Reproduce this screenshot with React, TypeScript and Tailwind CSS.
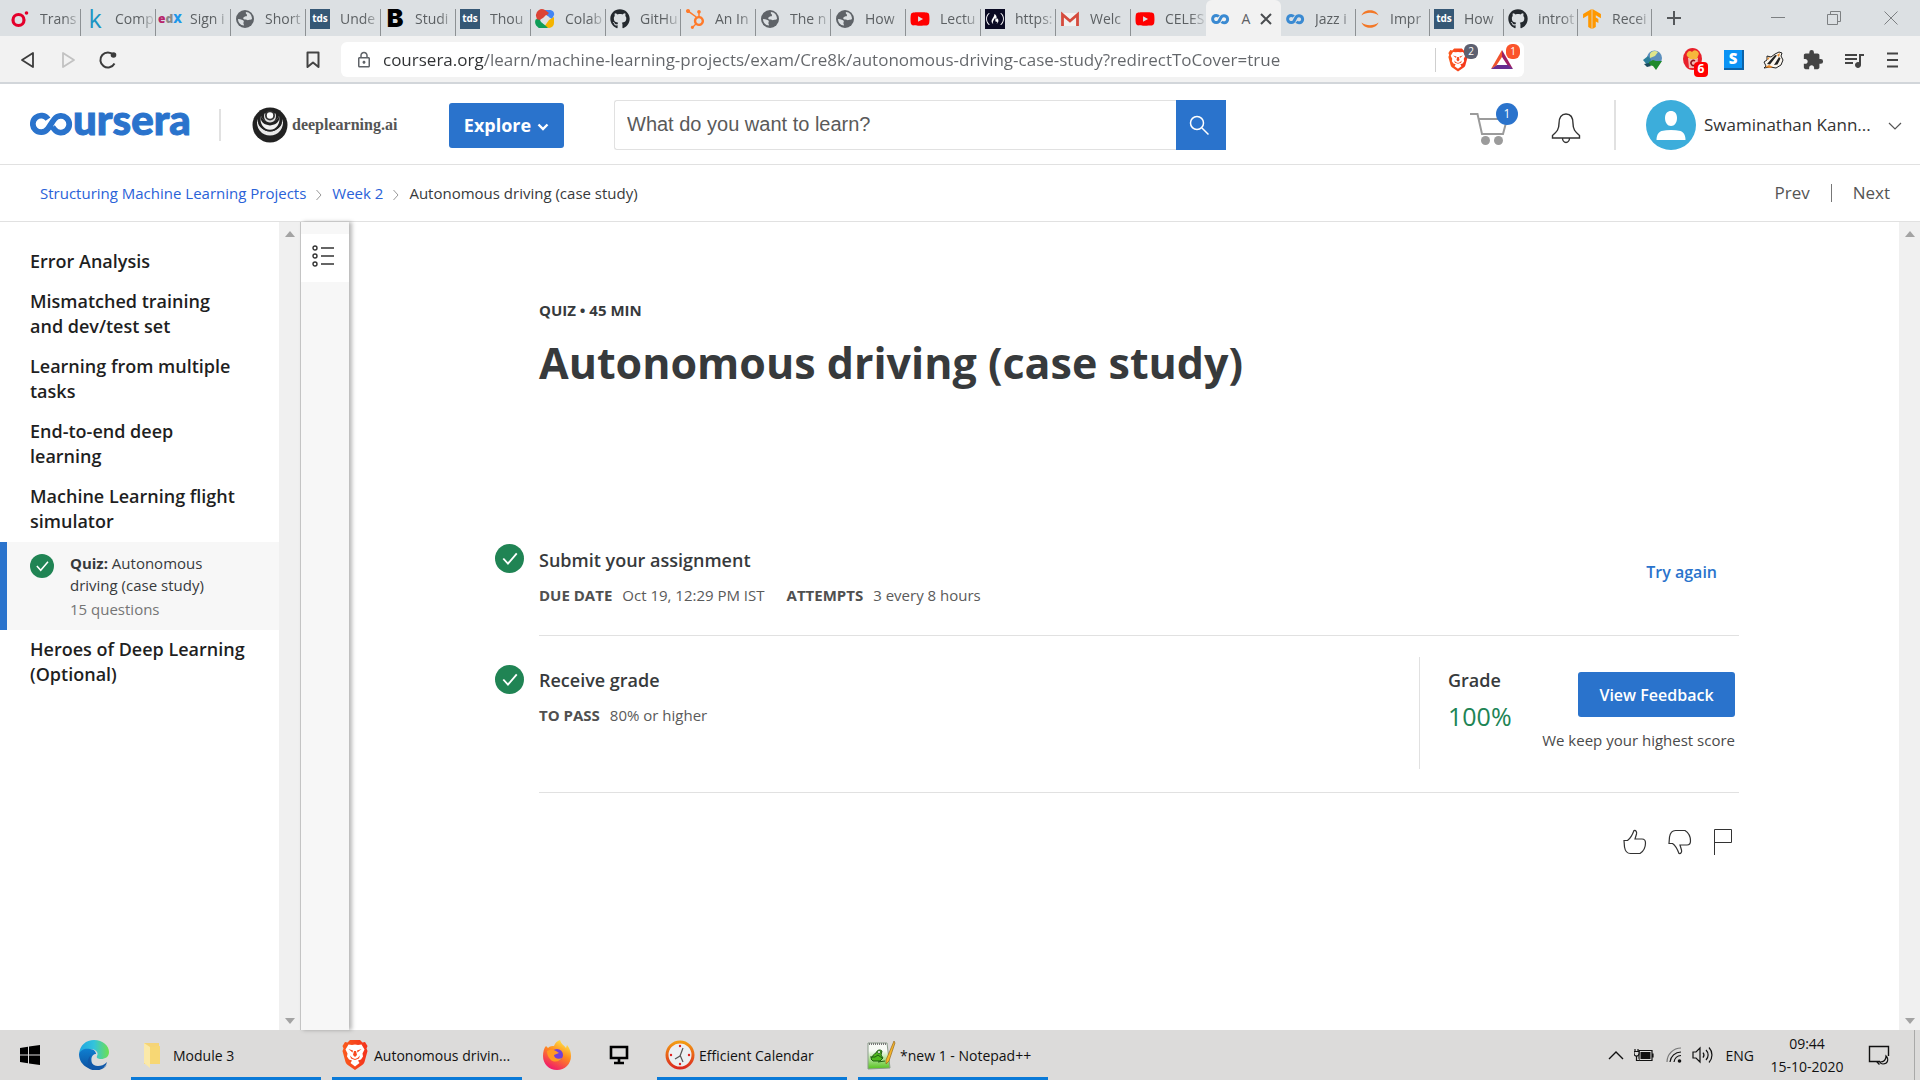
import { useState, type ReactNode } from "react";
import {
  FaFreeCodeCamp,
  FaGithub,
  FaHubspot,
  FaYoutube,
} from "react-icons/fa";
import { SiTensorflow } from "react-icons/si";
import { MdExtension, MdOutlineLock, MdQueueMusic } from "react-icons/md";

/* ---------- favicons ---------- */

const Globe = () => (
  <svg viewBox="0 0 20 20" className="size-5">
    <circle cx="10" cy="10" r="9" fill="#5f6368" />
    <path d="M3 10c1.500 0 3 .5 4.500 1 1.500.500 1.500 1.500 1 2.500s.5 1.500.5 3C5.500 16.500 3 13.500 3 10z" fill="#dce0e3" />
    <path d="M11 3c3.500 0 6 3 6 7-1 1-2.500.5-3.500 1s-2-.5-3.500-.5S7.500 9 9 8s2.500 0 3-1.500S10 5 11 3z" fill="#dce0e3" />
  </svg>
);

const Tds = () => (
  <span className="flex size-5 items-center justify-center bg-[#355876] text-[10px] font-bold text-white">tds</span>
);

const Infinity2 = () => (
  <svg viewBox="0 0 20 20" className="size-5">
    <path
      d="M8.800 7.500A3.600 3.600 0 1 0 8.800 12.500L11.200 8A3.600 3.600 0 1 1 11.500 12.800"
      fill="none"
      stroke="#3a8ad2"
      strokeWidth="3"
    />
  </svg>
);

const Colab = () => (
  <svg viewBox="0 0 20 20" className="size-5">
    <path d="M9 1h6a4 4 0 0 1 4 5l-2 4-5-3z" fill="#4285f4" />
    <path d="M1 7a6 6 0 0 1 9-6l4 3-5 5-3 1-3 4z" fill="#db4437" />
    <path d="M19 8v6a5 5 0 0 1-5 5l-5-1 5-7z" fill="#f4b400" />
    <path d="M1 10l4 1 1 2 5 4 2 2H7a6 6 0 0 1-6-9z" fill="#0f9d58" />
    <path d="M6 11l5-5 3 2-5 7z" fill="#dfe2e5" />
  </svg>
);

const Gmail = () => (
  <svg viewBox="0 0 20 20" className="size-5">
    <path d="M2 4h16v13H2z" fill="#f1f1f1" />
    <path d="M2.500 17V5.500L10 12l7.500-6.500V17" fill="none" stroke="#d54b3d" strokeWidth="2.800" />
  </svg>
);

const Jupyter = () => (
  <svg viewBox="0 0 20 20" className="size-5">
    <path d="M1.500 6.500C4-0.500 16-0.500 18.500 6.500 14 2.800 6 2.800 1.500 6.500z" fill="#f37726" />
    <path d="M1.500 13.500C4 20.500 16 20.500 18.500 13.500 14 17.200 6 17.200 1.500 13.500z" fill="#f37726" />
  </svg>
);

const Ring = () => (
  <svg viewBox="0 0 20 20" className="size-5">
    <circle cx="8.500" cy="11" r="5.500" fill="none" stroke="#e4002b" strokeWidth="3.200" />
    <circle cx="16.500" cy="4" r="1.800" fill="#e4002b" />
  </svg>
);

const BraveLion = ({ className }: { className: string }) => (
  <svg viewBox="0 0 26 30" className={className}>
    <defs>
      <linearGradient id="lion" x1="0" x2="1">
        <stop offset="0" stopColor="#fb5b1c" />
        <stop offset="1" stopColor="#f4321c" />
      </linearGradient>
    </defs>
    <path d="M8 0h10l2.500 2.500L23 2l2.500 4-1 2.500L25.500 11l-3 11c-.5 1.500-1.500 2.500-3 3.500L13 30l-6.500-4.500c-1.500-1-2.500-2-3-3.500L.5 11l1-2.500L.5 6 3 2l2.500.500z" fill="url(#lion)" />
    <path d="M6.500 4.500L10 5l3-.500 3 .500 3.500-.500 3 5-2 4 .5 3-2 3-3 1 1.500 2.500-4.500 3.500L8.500 23l1.500-2.500-3-1-2-3 .5-3-2-4z" fill="#fff" />
    <path d="M6.500 9l4.500 1.500-.5 2zM19.500 9L15 10.500l.5 2zM12 11h2l1 4-2 2-2-2zM8 15.500l2.500 2.500 2.500 1 2.500-1 2.500-2.500-1 3-4 1.500-4-1.500z" fill="#f8481e" />
  </svg>
);

const Letter = ({ children, className }: { children: ReactNode; className: string }) => (
  <span className={`flex size-5 items-center justify-center leading-none ${className}`}>{children}</span>
);

type Tab = { title: string; icon: ReactNode; active?: boolean; narrow?: boolean };

const tabs: Tab[] = [
  { title: "Trans", icon: <Ring /> },
  { title: "Comp", icon: <Letter className="text-[25px] font-medium text-[#1b95c4]">k</Letter> },
  {
    title: "Sign i",
    icon: (
      <Letter className="text-[12px] font-extrabold">
        <span className="text-[#b7256b]">e</span>
        <span className="text-[#8a8a8a]">d</span>
        <span className="text-[#1c97ea]">X</span>
      </Letter>
    ),
  },
  { title: "Short", icon: <Globe /> },
  { title: "Unde", icon: <Tds /> },
  { title: "Studi", icon: <Letter className="font-['Inter'] text-[25px] font-black text-black">B</Letter> },
  { title: "Thou", icon: <Tds /> },
  { title: "Colab", icon: <Colab /> },
  { title: "GitHu", icon: <FaGithub className="size-5 text-[#24292e]" /> },
  { title: "An In", icon: <FaHubspot className="size-5 text-[#ff7a2a]" /> },
  { title: "The n", icon: <Globe /> },
  { title: "How", icon: <Globe /> },
  { title: "Lectu", icon: <FaYoutube className="size-5 text-[#f00]" /> },
  {
    title: "https:",
    icon: (
      <span className="flex size-5 items-center justify-center bg-[#0a0a23] text-white">
        <FaFreeCodeCamp className="size-[18px]" />
      </span>
    ),
  },
  { title: "Welc", icon: <Gmail /> },
  { title: "CELES", icon: <FaYoutube className="size-5 text-[#f00]" /> },
  { title: "A", icon: <Infinity2 />, active: true },
  { title: "Jazz i", icon: <Infinity2 /> },
  { title: "Impr", icon: <Jupyter />, narrow: true },
  { title: "How", icon: <Tds />, narrow: true },
  { title: "introt", icon: <FaGithub className="size-5 text-[#24292e]" />, narrow: true },
  { title: "Recei", icon: <SiTensorflow className="size-5 text-[#ff9800]" />, narrow: true },
];

function TabStrip() {
  return (
    <div className="flex h-9 shrink-0 items-end bg-[#dce0e3] pl-1.5">
      <div role="tablist" aria-label="Tabs" className="flex h-full min-w-0 items-end">
        {tabs.map((tab, i) =>
          tab.active ? (
            <div key={i} className="flex h-full w-[75px] shrink-0 items-center gap-2 rounded-t-md bg-[#f2f2f2] pl-1 pt-0.5">
              <button role="tab" aria-selected="true" className="flex items-center gap-2.5">
                {tab.icon}
                <span className="w-3 text-[14px] leading-6 text-[#5c6063]">{tab.title}</span>
              </button>
              <button aria-label="Close tab">
                <svg viewBox="0 0 12 12" className="size-3">
                  <path d="M1 1l10 10M11 1L1 11" stroke="#4a4d50" strokeWidth="2" />
                </svg>
              </button>
            </div>
          ) : (
            <button
              key={i}
              role="tab"
              aria-selected="false"
              className={`flex h-[27px] shrink-0 items-center gap-2.5 pb-2 pl-1 ${tab.narrow ? "w-[74px]" : "w-[75px]"} ${
                tabs[i + 1]?.active ? "" : "border-r border-[#8d9194]"
              }`}
            >
              <span className="shrink-0">{tab.icon}</span>
              <span className="min-w-0 flex-1 whitespace-nowrap text-left text-[14px] leading-5 text-[#5c6063] [mask-image:linear-gradient(to_right,black_60%,transparent_105%)]">
                {tab.title}
              </span>
            </button>
          ),
        )}
      </div>
      <button aria-label="New tab" className="flex h-9 w-11 shrink-0 items-center justify-center">
        <svg viewBox="0 0 16 16" className="size-4">
          <path d="M8 1v14M1 8h14" stroke="#55585b" strokeWidth="2" />
        </svg>
      </button>
      <div className="ml-auto flex h-9 shrink-0">
        <button aria-label="Minimize" className="flex w-14 items-center justify-center">
          <svg viewBox="0 0 14 14" className="size-3.5">
            <path d="M0 6.500h14" stroke="#7d8082" />
          </svg>
        </button>
        <button aria-label="Restore" className="flex w-14 items-center justify-center">
          <svg viewBox="0 0 14 14" className="size-3.5">
            <path d="M.5 3.500h10v10H.500zM3.500 3.500V.500h10v10h-3" fill="none" stroke="#7d8082" />
          </svg>
        </button>
        <button aria-label="Close window" className="flex w-[58px] items-center justify-center">
          <svg viewBox="0 0 14 14" className="size-3.5">
            <path d="M.5.500l13 13M13.500.500l-13 13" stroke="#7d8082" />
          </svg>
        </button>
      </div>
    </div>
  );
}

function Toolbar() {
  const [url, setUrl] = useState(
    "coursera.org/learn/machine-learning-projects/exam/Cre8k/autonomous-driving-case-study?redirectToCover=true",
  );
  return (
    <div className="flex h-12 shrink-0 items-center border-b-2 border-[#d2d6da] bg-[#f2f2f2] pt-px">
      <button aria-label="Back" className="ml-[18px] flex size-5 items-center justify-center">
        <svg viewBox="0 0 20 20" className="size-5">
          <path d="M15 3v14L4 10z" fill="none" stroke="#3c3c3c" strokeWidth="1.800" strokeLinejoin="round" />
        </svg>
      </button>
      <button aria-label="Forward" className="ml-5 size-5">
        <svg viewBox="0 0 20 20" className="size-5">
          <path d="M5 3v14l11-7z" fill="none" stroke="#c2c2c2" strokeWidth="1.800" strokeLinejoin="round" />
        </svg>
      </button>
      <button aria-label="Reload" className="ml-5 size-5">
        <svg viewBox="0 0 20 20" className="size-5">
          <path d="M16.500 13.500A7.500 7.500 0 1 1 15.500 5" fill="none" stroke="#3c3c3c" strokeWidth="2" />
          <circle cx="15.500" cy="5" r="2.800" fill="#3c3c3c" />
        </svg>
      </button>
      <button aria-label="Bookmark" className="ml-[185px] size-5 shrink-0">
        <svg viewBox="0 0 20 20" className="size-5">
          <path d="M4.500 2.500h11V17L10 12.500 4.500 17z" fill="none" stroke="#444" strokeWidth="2" strokeLinejoin="round" />
        </svg>
      </button>
      <div className="ml-[18px] mr-[118px] flex h-[35px] min-w-0 flex-1 items-center rounded-md bg-white pl-3.5 pr-0.5">
        <MdOutlineLock className="size-[18px] shrink-0 text-[#5f6368]" />
        <input
          aria-label="Address"
          value={url}
          onChange={(e) => setUrl(e.target.value)}
          className="ml-2.5 min-w-0 flex-1 bg-[linear-gradient(to_right,#2f3133_101px,#63666a_101px)] bg-clip-text text-[17px] leading-7 text-transparent outline-none"
        />
        <span className="h-6 w-px bg-[#cfcfcf]" />
        <button aria-label="Brave Shields" className="relative ml-3 w-9">
          <BraveLion className="h-6 w-5" />
          <span className="absolute -top-1 left-4 flex h-[15px] w-3.5 items-center justify-center rounded-md bg-[#5d6070] text-[10px] text-white">2</span>
        </button>
        <button aria-label="Brave Rewards" className="relative ml-1.5 w-8">
          <svg viewBox="0 0 24 24" className="size-6">
            <path d="M12 2L1 21l5-3 6-9z" fill="#f0532d" />
            <path d="M12 2l11 19-5-3-6-9z" fill="#9e1f63" />
            <path d="M1 21h22l-5-4H7z" fill="#662d91" />
          </svg>
          <span className="absolute -top-1 left-4 flex h-[15px] w-3.5 items-center justify-center rounded-md bg-[#fb542b] text-[10px] text-white">1</span>
        </button>
      </div>
      <div className="flex shrink-0 items-center gap-[18px] pr-5">
        <button aria-label="Download manager" className="size-[22px]">
          <svg viewBox="0 0 22 22" className="size-[22px]">
            <circle cx="12.500" cy="9" r="7.500" fill="#5b8fbd" />
            <path d="M8 5c1-3 5-4 8-2l-3 4-5 2z" fill="#dfe58a" />
            <path d="M1 11l5-4 3 4-3 6z" fill="#2b7f9a" />
            <path d="M7 13l4-2 3 1h6l-6 9-3-4-4-1z" fill="#1e8a2c" />
            <path d="M2 15l5-1 2 3-4 1z" fill="#1b4b5c" />
          </svg>
        </button>
        <button aria-label="Popcorn extension" className="relative size-6">
          <svg viewBox="0 0 24 24" className="size-6">
            <ellipse cx="10.500" cy="11" rx="9.500" ry="11" fill="#e8212b" />
            <path d="M6 10h10l-1 10H7z" fill="#f3b9b2" />
            <path d="M6 9a3 3 0 0 1 4-5 3 3 0 0 1 6 4l-1 3H8z" fill="#f6b73c" />
            <path d="M13 13a2.500 2.500 0 1 0 0 4" fill="none" stroke="#8e1219" strokeWidth="1.500" />
          </svg>
          <span className="absolute left-3 top-3.5 flex h-[15px] w-3.5 items-center justify-center rounded-sm bg-[#f00] text-[12px] font-bold text-white">6</span>
        </button>
        <button aria-label="S extension" className="flex size-5 items-center justify-center border-b-2 border-r-2 border-[#0b62a8] bg-[#0a93f5] text-[15px] font-extrabold text-white">
          S
        </button>
        <button aria-label="Privacy Badger" className="size-[22px]">
          <svg viewBox="0 0 22 22" className="size-[22px]">
            <path d="M2 13l3-2 0-4 4 1 4-3 4-2 3 1-1 3 2 4-2 5-5 3-6-1-6 1 2-2z" fill="#fbf6ee" stroke="#222" />
            <path d="M5 15l8-9 2 .5-7 9zM12 16l5-8 1.500 1.500-3 6z" fill="#222" />
            <path d="M3 18l4-2 4 2-3 1zM5 9l3-1-2 3zM15 6l3-2-1 4z" fill="#e88a2d" />
          </svg>
        </button>
        <button aria-label="Extensions">
          <MdExtension className="size-[22px] text-[#444]" />
        </button>
        <button aria-label="Playlist">
          <MdQueueMusic className="size-6 text-[#444]" />
        </button>
        <button aria-label="Menu" className="size-4">
          <svg viewBox="0 0 16 16" className="size-4">
            <path d="M3 1.500h11M3 8h11M3 14.500h11" stroke="#444" strokeWidth="2" />
          </svg>
        </button>
      </div>
    </div>
  );
}

/* ---------- course site header ---------- */

function SiteHeader() {
  return (
    <header className="flex h-[81px] shrink-0 items-center border-b border-[#e1e1e1] bg-white pl-[30px] pr-[18px] pt-0.5">
      <a href="#home" aria-label="coursera" className="flex h-8 w-[160px] shrink-0 items-center pb-0.5 text-[#2a73cc]">
        <svg viewBox="0 0 43 24" className="h-6 w-[43px] shrink-0">
          <path
            d="M18 7.200A8.300 8.300 0 1 0 17.500 17.200C20 14 22 10 24.500 7A8.300 8.300 0 1 1 24.500 17.500L22.500 15"
            fill="none"
            stroke="currentColor"
            strokeWidth="5.800"
          />
        </svg>
        <span className="mb-2.5 font-['Lato'] text-[42px] font-black leading-8 [-webkit-text-stroke:1px_currentColor]">ursera</span>
      </a>
      <span className="ml-[29px] h-8 w-0.5 bg-[#e1e1e1]" />
      <a href="#deeplearning" className="ml-[31px] flex w-[146px] shrink-0 items-center gap-1">
        <svg viewBox="0 0 36 36" className="size-9 shrink-0">
          <circle cx="18" cy="18" r="17.500" fill="#222" />
          <path d="M5.500 12a13 13 0 1 0 25 0 12.500 12.500 0 0 1-25 0z" fill="#e8e8e8" />
          <path d="M5.500 12a12.500 10.500 0 1 0 25 0 12.500 12.500 0 0 1-25 0z" fill="#222" />
          <path d="M9 9a9.500 10.500 0 1 0 18 0 9.200 7.500 0 0 1-18 0z" fill="#f2f2f2" />
          <path d="M9 9a9.300 7.500 0 1 0 18 0 9.200 7 0 0 1-18 0z" fill="#222" />
          <path d="M12.500 6.500a6 6.500 0 1 0 11 0z" fill="#ddd" />
          <circle cx="18" cy="8.500" r="5" fill="#333" />
          <circle cx="18" cy="8.500" r="3.200" fill="#fff" />
        </svg>
        <span className="font-['Liberation_Serif'] text-[16px] font-bold leading-6 text-[#555]">deeplearning.ai</span>
      </a>
      <button className="ml-[51px] flex h-[45px] w-[115px] shrink-0 items-center justify-center gap-1.5 rounded-[3px] bg-[#2a73cc] text-[18px] font-bold text-white">
        Explore
        <svg viewBox="0 0 12 8" className="mt-1 h-2 w-3">
          <path d="M1.500 1.500L6 6l4.500-4.500" fill="none" stroke="#fff" strokeWidth="2.400" />
        </svg>
      </button>
      <form role="search" className="ml-[50px] flex h-[50px] w-[612px] shrink" onSubmit={(e) => e.preventDefault()}>
        <input
          aria-label="Search"
          placeholder="What do you want to learn?"
          className="min-w-0 flex-1 rounded-l-[3px] border border-r-0 border-[#e1e1e1] pb-0.5 pl-3 font-['Liberation_Sans'] text-[20px] text-[#333] outline-none placeholder:text-[#5a5a5a]"
        />
        <button aria-label="Submit search" className="flex w-[50px] items-center justify-center bg-[#2a73cc]">
          <svg viewBox="0 0 22 22" className="mr-1 size-[22px]">
            <circle cx="9" cy="9" r="6.500" fill="none" stroke="#fff" strokeWidth="1.500" />
            <path d="M14 14l6.500 6.500" stroke="#fff" strokeWidth="1.500" />
          </svg>
        </button>
      </form>
      <div className="ml-auto flex items-center">
        <button aria-label="Cart, 1 item" className="relative h-[50px] w-12">
          <svg viewBox="0 0 38 34" className="mt-2 h-[34px] w-[38px]">
            <path d="M0 2h7.500l4.500 20h21l4-15H9" fill="none" stroke="#9b9b9b" strokeWidth="2" />
            <circle cx="15.500" cy="28.500" r="4.500" fill="#9b9b9b" />
            <circle cx="28.500" cy="28.500" r="4.500" fill="#9b9b9b" />
          </svg>
          <span className="absolute left-[26px] top-[3px] flex size-[22px] items-center justify-center rounded-full bg-[#2a73cc] text-[12px] text-white">1</span>
        </button>
        <button aria-label="Notifications" className="ml-8 mt-1">
          <svg viewBox="0 0 32 34" className="h-[34px] w-8">
            <path
              d="M2.500 28v-2.500c4.500-4 6.500-6 6.500-12 0-6 2.500-9.500 7-9.500s7 3.500 7 9.500c0 6 2 8 6.500 12v2.500zM12.500 28a3.500 4.500 0 0 0 7 0"
              fill="none"
              stroke="#333"
              strokeWidth="1.400"
            />
          </svg>
        </button>
        <span className="ml-8 h-[50px] w-0.5 bg-[#e1e1e1]" />
        <button className="ml-[30px] flex items-center whitespace-nowrap text-[17px] text-[#333]">
          <svg viewBox="0 0 50 50" className="mr-2 size-[50px]">
            <circle cx="25" cy="25" r="25" fill="#3caddb" />
            <path d="M19 18c0-4.500 2.500-7 6-7s6 2.500 6 7-2.500 8-6 8-6-3.500-6-8z" fill="#fff" />
            <path d="M10.500 40c0-5 2-8 5-9 6-1.500 13-1.500 19 0 3 1 5 4 5 9z" fill="#fff" />
          </svg>
          <span className="w-[172px] text-left">Swaminathan Kann...</span>
          <svg viewBox="0 0 14 8" className="ml-3 mt-0.5 h-2 w-3.5">
            <path d="M1 1l6 6 6-6" fill="none" stroke="#555" strokeWidth="1.200" />
          </svg>
        </button>
      </div>
    </header>
  );
}

const CrumbArrow = () => (
  <svg viewBox="0 0 6 12" className="mt-1 h-3 w-1.5">
    <path d="M.5 1l4.500 5-4.500 5" fill="none" stroke="#999" />
  </svg>
);

function Breadcrumbs() {
  return (
    <div className="flex h-[57px] shrink-0 items-center justify-between border-b border-[#e1e1e1] bg-white pl-10 pr-[30px]">
      <nav aria-label="Breadcrumb" className="flex items-center gap-2.5 text-[15px] text-[#373a3c]">
        <a href="#course" className="text-[#2a62d8]">Structuring Machine Learning Projects</a>
        <CrumbArrow />
        <a href="#week2" className="text-[#2a62d8]">Week 2</a>
        <CrumbArrow />
        <span>Autonomous driving (case study)</span>
      </nav>
      <div className="flex items-center gap-[21px] text-[17px] text-[#555]">
        <a href="#prev">Prev</a>
        <span className="h-[18px] w-px bg-[#777]" />
        <a href="#next">Next</a>
      </div>
    </div>
  );
}

/* ---------- body ---------- */

const Check = ({ className }: { className: string }) => (
  <svg viewBox="0 0 28 28" className={className} role="img" aria-label="Completed">
    <circle cx="14" cy="14" r="14" fill="#208454" />
    <path d="M8 14l4.500 5L21 9" fill="none" stroke="#fff" strokeWidth="1.800" />
  </svg>
);

const ScrollBar = () => (
  <div aria-hidden="true" className="flex w-[21px] shrink-0 flex-col items-center justify-between bg-[#f0f0f0] pb-1.5 pt-[9px]">
    <svg viewBox="0 0 10 6" className="h-1.5 w-2.5">
      <path d="M5 0l5 6H0z" fill="#a3a3a3" />
    </svg>
    <svg viewBox="0 0 10 6" className="h-1.5 w-2.5">
      <path d="M5 6l5-6H0z" fill="#a3a3a3" />
    </svg>
  </div>
);

const lessons = [
  "Error Analysis",
  "Mismatched training and dev/test set",
  "Learning from multiple tasks",
  "End-to-end deep learning",
  "Machine Learning flight simulator",
];

const LessonLink = ({ title }: { title: string }) => (
  <a href="#lesson" className="block pb-2 pl-[30px] pr-8 pt-[7px] text-[18px] font-semibold leading-[25px] text-[#1f1f1f]">
    {title}
  </a>
);

function Sidebar() {
  return (
    <aside className="flex shrink-0 bg-white">
      <nav aria-label="Lessons" className="w-[279px] pt-5">
        {lessons.map((l) => (
          <LessonLink key={l} title={l} />
        ))}
        <a href="#quiz" className="flex h-[88px] border-l-[7px] border-[#2a73cc] bg-[#f7f7f7] pl-[23px] pt-2.5">
          <Check className="mt-0.5 size-6 shrink-0" />
          <span className="ml-4 w-[150px] text-[15px] leading-[22px] text-[#373a3c]">
            <b className="font-bold">Quiz:</b> Autonomous driving (case study)
            <span className="block pt-0.5 text-[#757575]">15 questions</span>
          </span>
        </a>
        <LessonLink title="Heroes of Deep Learning (Optional)" />
      </nav>
      <ScrollBar />
      <div className="z-10 w-[49px] border-l border-[#c4c4c4] bg-[#f7f7f7] pt-3 shadow-[3px_0_4px_rgba(0,0,0,0.28)]">
        <button aria-label="Toggle outline" className="flex h-12 w-full items-center justify-center bg-white">
          <svg viewBox="0 0 22 22" className="mb-1 mr-1 size-[22px]">
            <g fill="none" stroke="#333" strokeWidth="1.400">
              <circle cx="3" cy="3" r="2" />
              <circle cx="3" cy="11" r="2" />
              <circle cx="3" cy="19" r="2" />
              <path d="M9 3h13M9 11h13M9 19h13" />
            </g>
          </svg>
        </button>
      </div>
    </aside>
  );
}

const thumb = "M1 11.500h3.500c3-2 5-6 6.500-10 2-.5 3 1.500 2.500 3.500l-1.500 5h7c2 0 3.500 1.500 3.500 4 0 4.500-1.500 8-5.500 10.500H7.500C4 24.500 2 21 1.500 18z";

function Detail({ label, children }: { label: string; children: ReactNode }) {
  return (
    <span className="flex gap-2.5">
      <span className="font-bold text-[#505050]">{label}</span>
      <span>{children}</span>
    </span>
  );
}

function Main() {
  return (
    <main className="min-w-0 flex-1 bg-white pl-[146px] pr-40 pt-[77px]">
      <div className="pl-[44px] text-[#373a3c]">
        <p className="text-[15px] font-bold leading-[22px]">QUIZ • 45 MIN</p>
        <h1 className="mt-3 text-[43px] font-bold leading-[60px]">Autonomous driving (case study)</h1>
      </div>
      <section className="mt-[151px] grid grid-cols-[44px_1fr]">
        <Check className="size-[29px]" />
        <div className="flex h-[92px] items-start justify-between border-b border-[#e1e1e1] pt-[3px]">
          <div>
            <h2 className="text-[18px] font-semibold leading-[26px] text-[#373a3c]">Submit your assignment</h2>
            <div className="mt-[11px] flex gap-[22px] text-[15px] leading-[22px] text-[#5a5a5a]">
              <Detail label="DUE DATE">Oct 19, 12:29 PM IST</Detail>
              <Detail label="ATTEMPTS">3 every 8 hours</Detail>
            </div>
          </div>
          <button className="mr-[22px] mt-[13px] text-[16px] font-semibold leading-6 text-[#2a73cc]">Try again</button>
        </div>
      </section>
      <section className="grid grid-cols-[44px_1fr]">
        <Check className="mt-[29px] size-[29px]" />
        <div className="flex h-[157px] justify-between border-b border-[#e1e1e1] pb-[23px] pt-[21px]">
          <div className="pt-2.5">
            <h2 className="text-[18px] font-semibold leading-[26px] text-[#373a3c]">Receive grade</h2>
            <div className="mt-[11px] text-[15px] leading-[22px] text-[#5a5a5a]">
              <Detail label="TO PASS">80% or higher</Detail>
            </div>
          </div>
          <div className="flex w-[320px] justify-between border-l border-[#e1e1e1] pl-7 pr-1">
            <div className="pt-2.5">
              <h2 className="text-[18px] font-semibold leading-[26px] text-[#373a3c]">Grade</h2>
              <p className="mt-2 text-[25px] leading-[30px] text-[#208454]">100%</p>
            </div>
            <div className="-ml-4 flex flex-col items-end pt-[15px]">
              <button className="h-[45px] w-[157px] rounded-[3px] bg-[#2a73cc] text-[16px] font-semibold text-white">View Feedback</button>
              <p className="mt-3 whitespace-nowrap text-[15px] leading-[22px] text-[#4a4a4a]">We keep your highest score</p>
            </div>
          </div>
        </div>
      </section>
      <div className="mr-1.5 mt-9 flex justify-end gap-[21px]">
        <button aria-label="Like">
          <svg viewBox="0 0 24 26" className="h-[26px] w-6">
            <path d={thumb} fill="none" stroke="#333" strokeWidth="1.200" />
          </svg>
        </button>
        <button aria-label="Dislike">
          <svg viewBox="0 0 24 26" className="h-[26px] w-6 -scale-y-100">
            <path d={thumb} fill="none" stroke="#333" strokeWidth="1.200" />
          </svg>
        </button>
        <button aria-label="Flag">
          <svg viewBox="0 0 20 26" className="h-[26px] w-5">
            <path d="M1.500 26V.500h17v13H1.500" fill="none" stroke="#333" />
          </svg>
        </button>
      </div>
    </main>
  );
}

/* ---------- taskbar ---------- */

const TaskWindow = ({ icon, label, className = "" }: { icon: ReactNode; label: string; className?: string }) => (
  <button className={`flex h-full w-[190px] shrink-0 items-center border-b-[3px] border-[#0a7ad8] pt-[3px] text-[14px] text-[#111] ${className}`}>
    <span className="ml-2 mr-1 flex size-[30px] shrink-0 items-center justify-center">{icon}</span>
    {label}
  </button>
);

const Folder = () => (
  <svg viewBox="0 0 30 30" className="size-[30px]">
    <path d="M5 3h15v21H5z" fill="#f5d477" />
    <path d="M5 3l6 4v21l-6-5z" fill="#fbe9a9" />
    <path d="M11 7l10-1v18H11z" fill="#f7d774" />
  </svg>
);

const Edge = () => (
  <svg viewBox="0 0 30 30" className="size-[30px]">
    <defs>
      <linearGradient id="edgeTop" x1="0" x2="1">
        <stop offset="0" stopColor="#1fa5e0" />
        <stop offset=".5" stopColor="#33c3dd" />
        <stop offset="1" stopColor="#6ee04f" />
      </linearGradient>
      <linearGradient id="edgeLow" x1="0" x2="0" y1="0" y2="1">
        <stop offset="0" stopColor="#0f7fd0" />
        <stop offset="1" stopColor="#0c4f9e" />
      </linearGradient>
    </defs>
    <path d="M0 14C1 5 7 0 15 0c9 0 15 6 15 12 0 5-4 7-8 7-3 0-5-1-4-3 2-3-1-7-6-7C6 9 1 11 0 14z" fill="url(#edgeTop)" />
    <path d="M0 14c1-4 6-6 11-5 4 0 6 3 6 5-7 0-6 14 3 14 3 0 6-1 8-3-5 6-13 7-19 3C3 25 0 20 0 14z" fill="url(#edgeLow)" />
    <path d="M12 15c-3 5 1 11 7 11 3 0 6-1 9-4l-1 3c-3 4-8 5-12 5-6-1-9-9-3-15z" fill="#1058a8" />
  </svg>
);

const Firefox = () => (
  <svg viewBox="0 0 30 30" className="size-[30px]">
    <defs>
      <linearGradient id="fox" x1=".8" x2=".3" y1="0" y2="1">
        <stop offset="0" stopColor="#fff04a" />
        <stop offset=".45" stopColor="#ff8a1f" />
        <stop offset="1" stopColor="#f0146e" />
      </linearGradient>
    </defs>
    <path d="M18 0c1 4 4 5 6 8l1-3c3 4 4 7 4 11 0 8-6 14-14 14S1 24 1 16c0-4 1-8 3-10l2 2c2-2 4-2 6-2 1-3 3-5 6-6z" fill="url(#fox)" />
    <circle cx="15" cy="15" r="6" fill="#7141d8" />
    <path d="M5 11c3-2 6-2 9 0l3 2-5 2c0 3 4 5 8 3-2 4-9 5-12 1-2-2-3-5-3-8z" fill="#ff9a22" />
  </svg>
);

const Clock = () => (
  <svg viewBox="0 0 30 30" className="size-[30px]">
    <defs>
      <linearGradient id="rim" x1="0" x2="0" y1="0" y2="1">
        <stop offset="0" stopColor="#f39b12" />
        <stop offset="1" stopColor="#dc2a20" />
      </linearGradient>
    </defs>
    <circle cx="15" cy="15" r="13" fill="#eceff2" stroke="url(#rim)" strokeWidth="3" />
    <path d="M18 8l-3 8-5 3M15 15l3 7" fill="none" stroke="#555" strokeWidth="1.200" />
    <g fill="#e02020">
      <circle cx="15" cy="6" r="1.200" />
      <circle cx="24" cy="15" r="1.200" />
      <circle cx="15" cy="24" r="1.200" />
      <circle cx="6" cy="15" r="1.200" />
    </g>
  </svg>
);

const Notepad = () => (
  <svg viewBox="0 0 30 30" className="size-[30px]">
    <defs>
      <linearGradient id="pad" x1="0" x2="0" y1="0" y2="1">
        <stop offset=".3" stopColor="#f7faf5" />
        <stop offset="1" stopColor="#54c31c" />
      </linearGradient>
    </defs>
    <path d="M2 3h19l3 25-22 1z" fill="url(#pad)" stroke="#8a9a8a" />
    <path d="M3 4h18" stroke="#777" strokeWidth="2" strokeDasharray="1 1" />
    <path d="M5 19c1-3 3-5 5-6 1-3 4-4 6-2l-1 4 2 3-3 3H7z" fill="#4fb81d" stroke="#1f5e10" />
    <path d="M4 17h5l3-2 4 3M12 22l7-1" fill="none" stroke="#1f5e10" />
    <circle cx="13" cy="12" r="1.500" fill="#fff" stroke="#1f5e10" strokeWidth=".800" />
    <path d="M28 1l1 2-6 18-3 3v-4z" fill="#f5b52a" stroke="#8a5a12" strokeWidth=".600" />
  </svg>
);

function Taskbar() {
  return (
    <footer className="flex h-[50px] shrink-0 items-center bg-[#dcdbda] text-[#111]">
      <button aria-label="Start" className="ml-5">
        <svg viewBox="0 0 20 20" className="size-5">
          <path d="M0 3l8-1.200V9.500H0zM9 1.600L20 0v9.500H9zM0 10.500h8v7.700L0 17zM9 10.500h11V20L9 18.400z" fill="#000" />
        </svg>
      </button>
      <button aria-label="Microsoft Edge" className="ml-[39px] mr-[22px] shrink-0">
        <Edge />
      </button>
      <TaskWindow icon={<Folder />} label="Module 3" />
      <TaskWindow icon={<BraveLion className="h-[30px] w-[26px]" />} label="Autonomous drivin..." className="ml-[11px]" />
      <button aria-label="Firefox" className="ml-5 shrink-0">
        <Firefox />
      </button>
      <button aria-label="Display" className="ml-[37px] mr-7 shrink-0">
        <svg viewBox="0 0 20 20" className="size-5">
          <path d="M2 2h16v11H2zM10 13v4M5 18h10" fill="none" stroke="#000" strokeWidth="2.600" />
        </svg>
      </button>
      <TaskWindow icon={<Clock />} label="Efficient Calendar" />
      <TaskWindow icon={<Notepad />} label="*new 1 - Notepad++" className="ml-[11px]" />
      <div className="ml-auto flex h-full items-center">
        <button aria-label="Show hidden icons">
          <svg viewBox="0 0 16 9" className="h-[9px] w-4">
            <path d="M1 8l7-7 7 7" fill="none" stroke="#111" strokeWidth="1.400" />
          </svg>
        </button>
        <svg viewBox="0 0 20 14" className="ml-2.5 h-3.5 w-5" role="img" aria-label="Battery charging">
          <path d="M5 2.500h13v10H5zM19 5.500v4" fill="none" stroke="#111" strokeWidth="1.200" />
          <path d="M6.500 4h10v7h-10z" fill="#111" />
          <path d="M0 3.500h5v2a2.500 2.500 0 0 1-5 0zM1 3.500V1M4 3.500V1M2.500 8v4.500h3" fill="#dcdbda" stroke="#111" strokeWidth="1.200" />
        </svg>
        <svg viewBox="0 0 16 16" className="ml-3 size-4" role="img" aria-label="Wi-Fi">
          <g fill="none" stroke="#111" strokeWidth="1.200">
            <path d="M1 15A14 14 0 0 1 15 1" stroke="#777" />
            <path d="M4 15A11 11 0 0 1 15 5" />
            <path d="M8 15a7.500 7.500 0 0 1 7-6.500" />
          </g>
          <circle cx="13.500" cy="14" r="1.800" fill="#111" />
        </svg>
        <svg viewBox="0 0 22 18" className="ml-2.5 h-[18px] w-[22px]" role="img" aria-label="Volume">
          <g fill="none" stroke="#111" strokeWidth="1.200">
            <path d="M1 6h3l4-4v14l-4-4H1z" />
            <path d="M11 6.500a4 4 0 0 1 0 5M14 4a7 7 0 0 1 0 10M17 1.500a11 11 0 0 1 0 15" />
          </g>
        </svg>
        <span className="ml-3 text-[14px]">ENG</span>
        <div className="ml-3.5 w-[78px] whitespace-nowrap text-center text-[14px] leading-[23px]">
          <div>09:44</div>
          <div>15-10-2020</div>
        </div>
        <button aria-label="Notifications" className="ml-[22px]">
          <svg viewBox="0 0 22 22" className="size-[22px]">
            <path d="M12 17.500H8.500l-7-.001v-15h19V12M8.500 17.500l3 3" fill="none" stroke="#111" strokeWidth="1.400" />
            <path d="M18 12c3 3 2 8-3 8-1.500 0-3-1-3-2 4 0 6-2 6-6z" fill="none" stroke="#111" strokeWidth="1.200" />
          </svg>
        </button>
        <span className="ml-6 mr-[5px] h-full w-px bg-[#a9a9a8]" />
      </div>
    </footer>
  );
}

export default function App() {
  return (
    <div className="flex h-screen flex-col overflow-hidden bg-white font-['Open_Sans','Noto_Sans',sans-serif]">
      <TabStrip />
      <Toolbar />
      <SiteHeader />
      <Breadcrumbs />
      <div className="flex min-h-0 flex-1">
        <Sidebar />
        <Main />
        <ScrollBar />
      </div>
      <Taskbar />
    </div>
  );
}
